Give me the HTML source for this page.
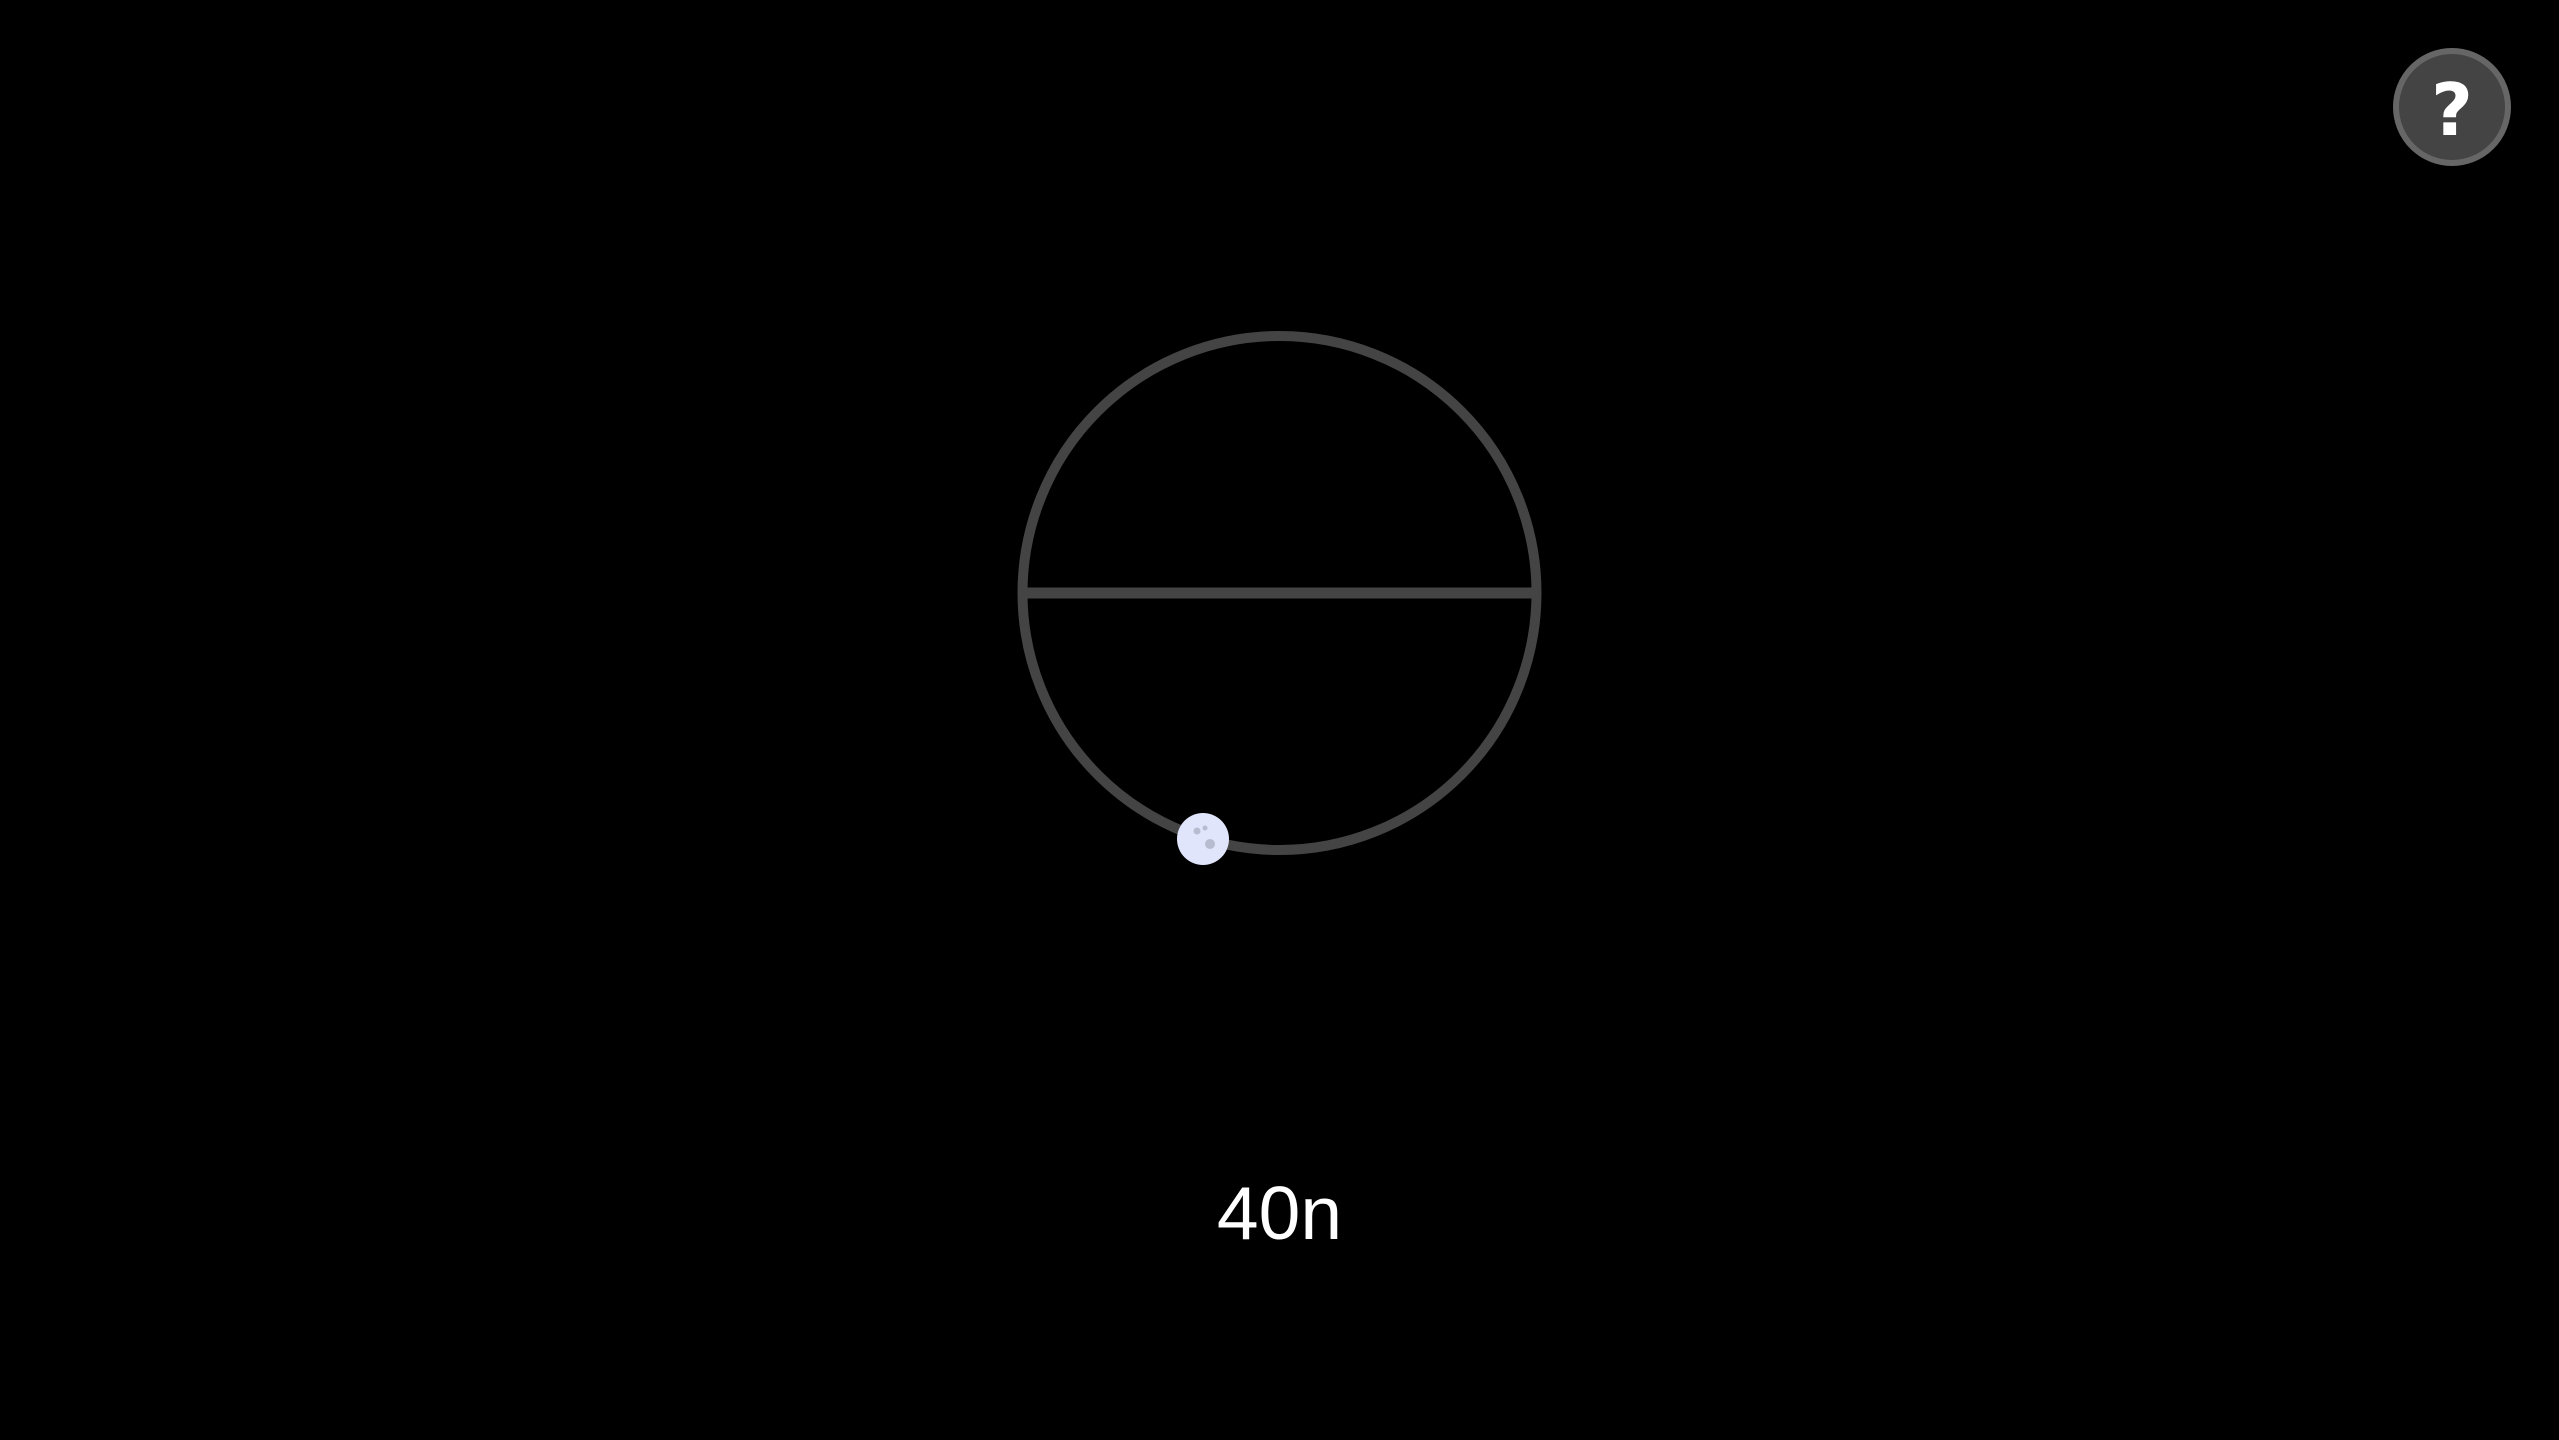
<!DOCTYPE html>
<html><head><meta charset="utf-8"><style>
html,body{margin:0;padding:0;background:#000;width:2559px;height:1440px;overflow:hidden}
.t{position:absolute;left:0;width:2559px;top:1170px;text-align:center;color:#fff;font-family:"Liberation Sans",sans-serif;font-size:75px;line-height:86px}
</style></head><body>
<svg width="2559" height="1440" style="position:absolute;left:0;top:0">
<circle cx="1279.5" cy="593" r="257" fill="none" stroke="#444" stroke-width="10"/>
<line x1="1022" y1="593" x2="1537" y2="593" stroke="#444" stroke-width="11"/>
<circle cx="1203" cy="839" r="26" fill="#e1e5fb"/>
<circle cx="1197" cy="831" r="3.5" fill="#b8bcd0"/>
<circle cx="1205" cy="828" r="2.5" fill="#b8bcd0"/>
<circle cx="1210" cy="844" r="5" fill="#b8bcd0"/>
<circle cx="2452" cy="107" r="56" fill="#444" stroke="#666" stroke-width="6"/>
<text x="2452" y="135" text-anchor="middle" fill="#fff" font-family="DejaVu Sans, Liberation Sans, sans-serif" font-weight="bold" font-size="72">?</text>
</svg>
<div class="t">40n</div>
</body></html>
